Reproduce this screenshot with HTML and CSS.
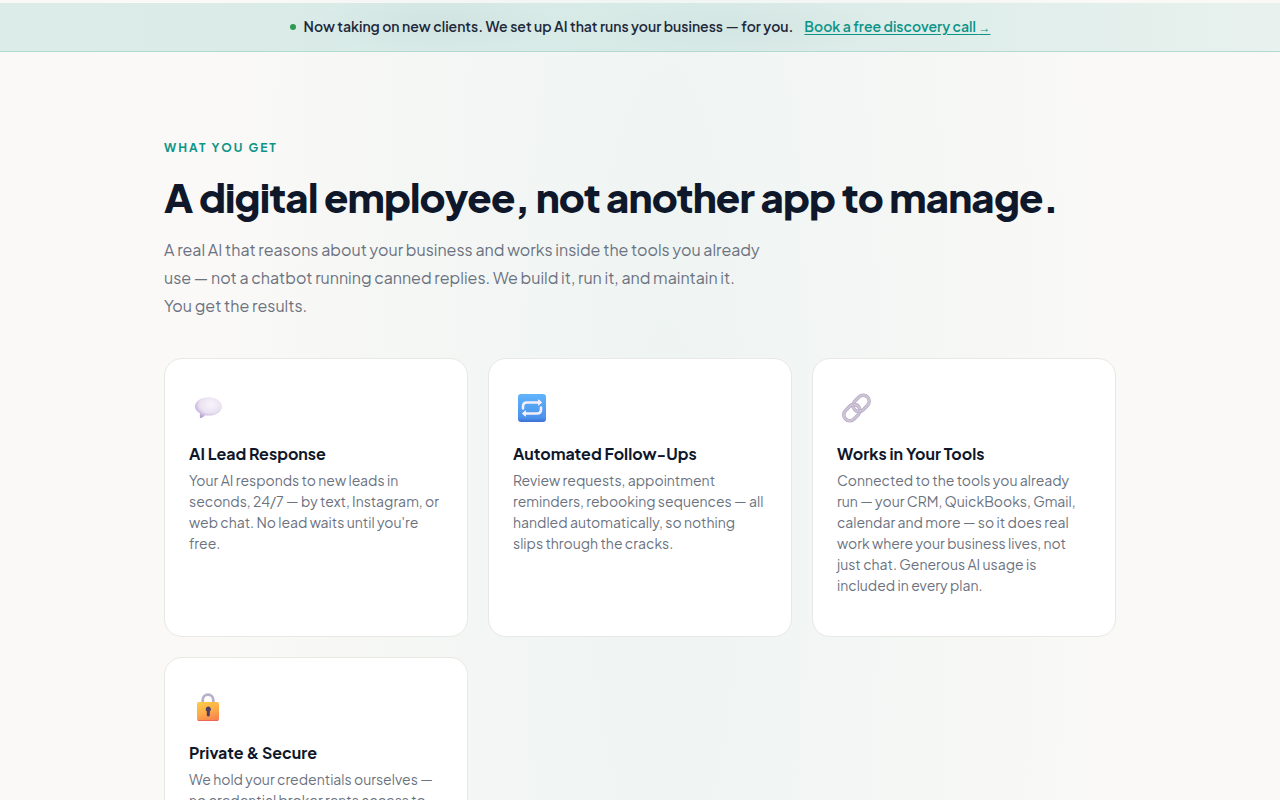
FILE: index.html
```html
<!DOCTYPE html>
<html lang="en">
<head>
    <meta charset="UTF-8">
    <meta name="viewport" content="width=device-width, initial-scale=1.0">
    <title>A digital employee</title>
    <link rel="stylesheet" href="styles.css">
</head>
<body>

<!-- Announcement bar -->
<div class="announce">
    <span class="announce-dot"></span>
    <p>Now taking on new clients. We set up AI that runs your business — for you.</p>
    <a href="#book">Book a free discovery call <span class="arrow">→</span></a>
</div>

<main class="container">
    <p class="eyebrow">What you get</p>
    <h2>A digital employee, not another app to manage.</h2>
    <p class="lead">A real AI that reasons about your business and works inside the tools you already use — not a chatbot running canned replies. We build it, run it, and maintain it. You get the results.</p>

    <div class="features">
        <article class="card">
            <svg class="card-icon" viewBox="0 0 38 38" aria-hidden="true">
                <defs>
                    <radialGradient id="bubble" cx=".58" cy=".35" r=".68">
                        <stop offset="0" stop-color="#f8f4fb"/>
                        <stop offset=".6" stop-color="#eae2f1"/>
                        <stop offset="1" stop-color="#b7a0d4"/>
                    </radialGradient>
                </defs>
                <path d="M19.500 8.200C27 8.200 33 12.400 33 17.400S27 26.600 19.500 26.600c-1.200 0-2.300-.1-3.400-.3-1.200 1.500-2.900 2.500-4.600 2.700-.4 0-.6-.2-.6-.6v-4.200C8 22.600 6 20.200 6 17.400c0-5 6-9.200 13.500-9.200z" fill="url(#bubble)"/>
            </svg>
            <h3>AI Lead Response</h3>
            <p>Your AI responds to new leads in seconds, 24/7 — by text, Instagram, or web chat. No lead waits until you're free.</p>
        </article>

        <article class="card">
            <svg class="card-icon" viewBox="0 0 38 38" aria-hidden="true">
                <defs>
                    <linearGradient id="tile" x1="0" y1="0" x2="0" y2="1">
                        <stop offset="0" stop-color="#60b4fb"/>
                        <stop offset=".85" stop-color="#4b92ec"/>
                        <stop offset="1" stop-color="#3f6fd2"/>
                    </linearGradient>
                </defs>
                <rect x="5" y="5" width="28" height="28" rx="3" fill="url(#tile)"/>
                <path d="M10 19.500v-2c0-2.500 1.500-4 4-4H26M28 18.500v2c0 2.500-1.500 4-4 4H12" fill="none" stroke="#f3eefb" stroke-width="2.600" stroke-linecap="round"/>
                <path d="M25.500 10.800l3.200 2.700-3.200 2.700zM12.500 21.800l-3.200 2.700 3.200 2.700z" fill="#f3eefb" stroke="#f3eefb" stroke-linejoin="round"/>
            </svg>
            <h3>Automated Follow-Ups</h3>
            <p>Review requests, appointment reminders, rebooking sequences — all handled automatically, so nothing slips through the cracks.</p>
        </article>

        <article class="card">
            <svg class="card-icon" viewBox="0 0 38 38" aria-hidden="true">
                <g transform="rotate(-45 19.500 19)" fill="none">
                    <rect x="4" y="13" width="18" height="12" rx="6" stroke="#b3a7be" stroke-width="3.400"/>
                    <rect x="4" y="13" width="18" height="12" rx="6" stroke="#cdc3d6" stroke-width="2.400"/>
                    <rect x="17" y="13" width="18" height="12" rx="6" stroke="#b3a7be" stroke-width="3.400"/>
                    <rect x="17" y="13" width="18" height="12" rx="6" stroke="#cdc3d6" stroke-width="2.400"/>
                    <path d="M16 13c3.300 0 6 2.700 6 6" stroke="#b3a7be" stroke-width="3.400"/>
                    <path d="M15 13h1c3.300 0 6 2.700 6 6v1" stroke="#cdc3d6" stroke-width="2.400"/>
                </g>
            </svg>
            <h3>Works in Your Tools</h3>
            <p>Connected to the tools you already run — your CRM, QuickBooks, Gmail, calendar and more — so it does real work where your business lives, not just chat. Generous AI usage is included in every plan.</p>
        </article>

        <article class="card">
            <svg class="card-icon" viewBox="0 0 38 38" aria-hidden="true">
                <defs>
                    <linearGradient id="lock" x1=".3" y1="0" x2=".7" y2="1">
                        <stop offset="0" stop-color="#fcc846"/>
                        <stop offset=".5" stop-color="#fcac4a"/>
                        <stop offset="1" stop-color="#f8804e"/>
                    </linearGradient>
                </defs>
                <path d="M13.700 16v-4a5.300 5.300 0 0 1 10.600 0V16" fill="none" stroke="#b9b0c6" stroke-width="2.800"/>
                <rect x="8" y="14" width="22" height="19" rx="2" fill="url(#lock)"/>
                <path d="M9 32.500h20" stroke="#ea6557"/>
                <path d="M19.300 18.500a2.700 2.700 0 0 1 1.500 4.900v3.600a1.500 1.500 0 0 1-3 0v-3.600a2.700 2.700 0 0 1 1.500-4.900z" fill="#4d3d67"/>
            </svg>
            <h3>Private &amp; Secure</h3>
            <p>We hold your credentials ourselves — no credential broker rents access to</p>
        </article>
    </div>
</main>

</body>
</html>
```
FILE: styles.css
```css
* {
    margin: 0;
    padding: 0;
    box-sizing: border-box;
}

body {
    font-family: "Plus Jakarta Sans", Inter, sans-serif;
    color: #0f172a;
    background: radial-gradient(ellipse 36% 250% at 52% 50%, #eef4f2, #faf9f7) #faf9f7;
    min-height: 100vh;
    padding-top: 3px;
}

/* Announcement bar */
.announce {
    display: flex;
    align-items: center;
    justify-content: center;
    min-height: 49px;
    padding: 8px 24px 10px;
    font-size: 14px;
    line-height: 20px;
    font-weight: 600;
    color: #1e293b;
    border-bottom: 1px solid #b2dad3;
    background:
        radial-gradient(ellipse 120px 32px at 34% 40%, rgba(15, 60, 80, 0.04), transparent),
        radial-gradient(ellipse 150px 32px at 58% 50%, rgba(15, 60, 80, 0.03), transparent),
        linear-gradient(90deg, #dcece9, #d7eae6 50%, #e8f1ee);
}

.announce-dot {
    width: 6px;
    height: 6px;
    margin-top: 2px;
    margin-right: 8px;
    border-radius: 50%;
    background-color: #2f9852;
}

.announce a {
    margin-left: 11px;
    color: #0d9488;
    text-underline-offset: 2px;
}

.arrow {
    font-family: "Liberation Sans", Arial, sans-serif;
    font-size: 12px;
    line-height: 1;
    font-weight: 400;
}

.container {
    max-width: 1000px;
    margin: 0 auto;
    padding: 86px 24px;
}

.eyebrow {
    font-size: 12px;
    line-height: 20px;
    font-weight: 700;
    letter-spacing: 2px;
    text-transform: uppercase;
    color: #0d9488;
    margin-bottom: 15px;
}

h2 {
    font-size: 40px;
    line-height: 48px;
    font-weight: 800;
    letter-spacing: -0.02em;
    margin-bottom: 15px;
}

.lead {
    max-width: 600px;
    font-size: 16px;
    line-height: 28px;
    color: #6b7280;
    margin-bottom: 38px;
}

/* Feature cards */
.features {
    display: grid;
    grid-template-columns: repeat(3, 1fr);
    gap: 20px;
}

.card {
    padding: 30px 24px 40px;
    background-color: #fff;
    border: 1px solid #e8e8e4;
    border-radius: 18px;
}

.card-icon {
    display: block;
    width: 38px;
    height: 38px;
    margin-bottom: 15px;
}

.card h3 {
    font-size: 16px;
    line-height: 24px;
    font-weight: 700;
    margin-bottom: 4px;
}

.card p {
    font-size: 14px;
    line-height: 21px;
    color: #6b7280;
}

@media screen and (max-width: 860px) {
    .features {
        grid-template-columns: 1fr;
    }

    h2 {
        font-size: 32px;
        line-height: 40px;
    }
}
```
